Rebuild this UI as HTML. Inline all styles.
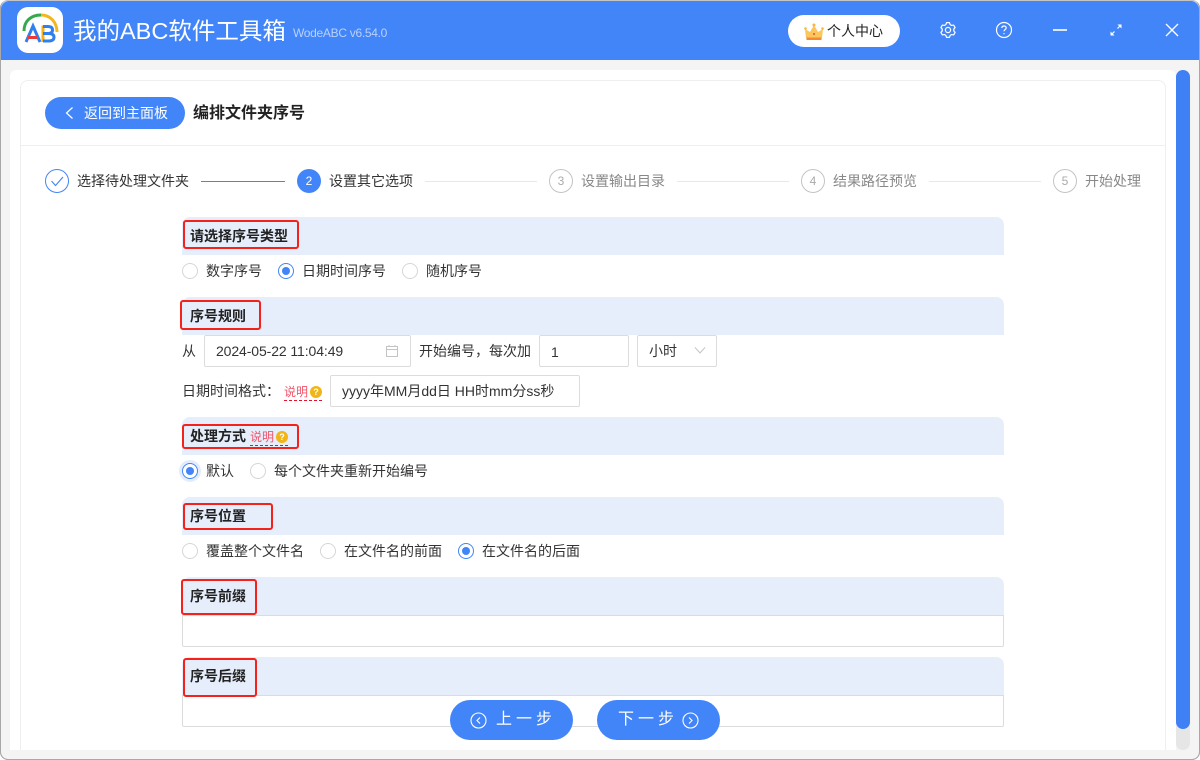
<!DOCTYPE html>
<html lang="zh"><head><meta charset="utf-8"><title>我的ABC软件工具箱</title>
<style>
*{box-sizing:border-box}
html,body{margin:0;padding:0;width:1200px;height:760px;overflow:hidden;background:#fff}
body{font-family:"Liberation Sans","Noto Sans CJK SC",sans-serif;font-size:14px;color:#333;position:relative}
.a{position:absolute}
.t{position:absolute;white-space:nowrap;line-height:20px}
.bar{position:absolute;left:182px;width:822px;height:38px;background:#e6edfb;border-radius:8px 8px 0 0}
.red{position:absolute;border:2.5px solid #f5221b;border-radius:3px}
.h{position:absolute;white-space:nowrap;font-weight:bold;font-size:14px;line-height:20px;color:#222;left:190px}
.r{position:absolute;width:16px;height:16px;border-radius:50%;border:1px solid #d6d6d6;background:#fff}
.r.on{border-color:#4285f9}
.r.on:after{content:"";position:absolute;left:3px;top:3px;width:8px;height:8px;border-radius:50%;background:#4285f9}
.box{position:absolute;border:1px solid #dcdcdc;border-radius:2px;background:#fff}
.num{position:absolute;width:24px;height:24px;border-radius:50%;border:1px solid #c4c4c4;color:#aaa;font-size:12px;line-height:22px;text-align:center}
.grey{color:#888}
.line{position:absolute;height:1px;top:181px;background:#e8e8e8}
.btn{position:absolute;top:700px;height:40px;width:123px;border-radius:20px;background:#4285f9;color:#fff;font-size:16px;line-height:40px;white-space:nowrap}
.q{position:absolute;width:12px;height:12px;border-radius:50%;background:#f2b517;color:#fff;font-size:9px;font-weight:bold;line-height:12px;text-align:center}
.link{position:absolute;color:#f0556a;font-size:12px;line-height:18px;white-space:nowrap;border-bottom:1px dashed #e8112d}
</style></head><body>
<div class="a" style="left:0;top:0;width:1200px;height:760px;background:#f4f4f4;border-radius:8px;border:1px solid #a8a8a8;border-top-color:#bbb"></div>
<div class="a" style="left:1px;top:1px;width:1198px;height:59px;background:#4285f9;border-radius:8px 8px 0 0"></div>

<!-- logo -->
<div class="a" style="left:17px;top:7px;width:46px;height:46px;background:#fff;border-radius:11px"></div>
<svg class="a" style="left:17px;top:7px" width="46" height="46" viewBox="0 0 46 46" fill="none">
<path d="M7 24C7 14 14 8 24 8" stroke="#35a94c" stroke-width="3"/>
<path d="M24 8C33 8 40 15 40 25" stroke="#f4b61e" stroke-width="3"/>
<path d="M9 35L16 19L23 35" stroke="#2f80ee" stroke-width="3"/>
<path d="M11 30.500H20" stroke="#ea3a3a" stroke-width="3"/>
<path d="M26 18.500V35" stroke="#f2b01e" stroke-width="3"/>
<path d="M26 19.500H31Q35.500 19.500 35.500 23Q35.500 26.500 31 26.500H26M31 26.500Q37 26.500 37 30.200Q37 34 31 34H26" stroke="#2f80ee" stroke-width="3"/>
</svg>
<div class="t" style="left:73px;top:16px;font-size:23.5px;line-height:30px;color:#fff">我的ABC软件工具箱</div>
<div class="t" style="left:293px;top:23px;font-size:12px;letter-spacing:-.3px;color:#b9d1fb">WodeABC v6.54.0</div>

<!-- user btn -->
<div class="a" style="left:788px;top:15px;width:112px;height:32px;border-radius:16px;background:#fff"></div>
<svg class="a" style="left:804px;top:23px" width="20" height="18" viewBox="0 0 20 18"><path d="M2 15L1 6L6 9L10 2L14 9L19 6L18 15Z" fill="#fbc65c"/><rect x="2.500" y="14.500" width="15" height="2.500" fill="#f58a2c"/><circle cx="10" cy="2" r="1.500" fill="#f9b53f"/><circle cx="1.500" cy="5.500" r="1.300" fill="#f9b53f"/><circle cx="18.500" cy="5.500" r="1.300" fill="#f9b53f"/><circle cx="10" cy="11" r="1" fill="#e8503a"/></svg>
<div class="t" style="left:827px;top:21px;font-size:14px;color:#222">个人中心</div>

<!-- window icons -->
<svg class="a" style="left:938px;top:20px" width="20" height="20" viewBox="0 0 20 20" fill="none" stroke="#fff" stroke-width="1.200" stroke-linejoin="round"><path d="M7.830 4.620L8.570 2.640L11.430 2.640L12.170 4.620L13.570 5.430L15.660 5.080L17.090 7.560L15.740 9.190V10.810L17.090 12.440L15.660 14.920L13.570 14.570L12.170 15.380L11.430 17.360L8.570 17.360L7.830 15.380L6.430 14.570L4.340 14.920L2.910 12.440L4.260 10.810V9.190L2.910 7.560L4.340 5.080L6.430 5.430Z"/><circle cx="10" cy="10" r="2.600"/></svg>
<svg class="a" style="left:994px;top:20px" width="20" height="20" viewBox="0 0 20 20" fill="none" stroke="#fff" stroke-width="1.200"><circle cx="10" cy="10" r="7.500"/><path d="M7.800 8C7.800 6.700 8.800 6 10 6C11.300 6 12.200 6.800 12.200 7.900C12.200 9.500 10 9.500 10 11.300"/><path d="M10 13V14.200"/></svg>
<div class="a" style="left:1053px;top:29px;width:14px;height:2px;background:#dbe7fd"></div>
<svg class="a" style="left:1108px;top:22px" width="16" height="16" viewBox="0 0 16 16" fill="none" stroke="#fff" stroke-width="1.200"><path d="M3 13L6.500 9.500M9.500 6.500L13 3"/><path d="M2.500 9.500V13.500H6.500L2.500 9.500Z M13.500 6.500V2.500H9.500L13.500 6.500Z" fill="#fff" stroke="none"/></svg>
<svg class="a" style="left:1164px;top:22px" width="16" height="16" viewBox="0 0 16 16" fill="none" stroke="#fff" stroke-width="1.300"><path d="M2 2L14 14M14 2L2 14"/></svg>

<!-- outer panel -->
<div class="a" style="left:10px;top:70px;width:1166px;height:680px;background:#fff;border-radius:6px 6px 0 0"></div>
<div class="a" style="left:20px;top:80px;width:1146px;height:680px;background:#fff;border:1px solid #efefef;border-radius:8px 8px 0 0"></div>
<div class="a" style="left:21px;top:145px;width:1144px;height:1px;background:#efefef"></div>

<!-- scrollbar -->
<div class="a" style="left:1176px;top:70px;width:14px;height:680px;background:#e6e6e6;border-radius:7px"></div>
<div class="a" style="left:1176px;top:70px;width:14px;height:659px;background:#4080f5;border-radius:7px"></div>

<!-- back -->
<div class="a" style="left:45px;top:97px;width:140px;height:32px;border-radius:16px;background:#4285f9"></div>
<svg class="a" style="left:63px;top:106px" width="12" height="14" viewBox="0 0 12 14" fill="none" stroke="#fff" stroke-width="1.200"><path d="M9.500 1.500L3.500 7L9.500 12.500"/></svg>
<div class="t" style="left:84px;top:103px;color:#fff;font-size:14px">返回到主面板</div>
<div class="t" style="left:193px;top:104px;font-size:16px;font-weight:bold;color:#222">编排文件夹序号</div>

<!-- steps -->
<div class="a" style="left:45px;top:169px;width:24px;height:24px;border-radius:50%;border:1px solid #4285f9"></div>
<svg class="a" style="left:45px;top:169px" width="24" height="24" viewBox="0 0 24 24" fill="none" stroke="#4285f9" stroke-width="1.100"><path d="M6.500 12L10.500 16.500L18 8"/></svg>
<div class="t" style="left:77px;top:171px">选择待处理文件夹</div>
<div class="line" style="left:201px;width:84px;background:#4a84e8"></div>
<div class="a" style="left:297px;top:169px;width:24px;height:24px;border-radius:50%;background:#4285f9;color:#fff;font-size:12px;line-height:25px;text-align:center">2</div>
<div class="t" style="left:329px;top:171px">设置其它选项</div>
<div class="line" style="left:425px;width:112px"></div>
<div class="num" style="left:549px;top:169px">3</div>
<div class="t grey" style="left:581px;top:171px">设置输出目录</div>
<div class="line" style="left:677px;width:112px"></div>
<div class="num" style="left:801px;top:169px">4</div>
<div class="t grey" style="left:833px;top:171px">结果路径预览</div>
<div class="line" style="left:929px;width:112px"></div>
<div class="num" style="left:1053px;top:169px">5</div>
<div class="t grey" style="left:1085px;top:171px">开始处理</div>

<!-- section 1 -->
<div class="bar" style="top:217px"></div>
<div class="h" style="top:226px">请选择序号类型</div>
<div class="red" style="left:183px;top:220px;width:116px;height:29px"></div>
<div class="r" style="left:182px;top:263px"></div><div class="t" style="left:206px;top:261px">数字序号</div>
<div class="r on" style="left:278px;top:263px"></div><div class="t" style="left:302px;top:261px">日期时间序号</div>
<div class="r" style="left:402px;top:263px"></div><div class="t" style="left:426px;top:261px">随机序号</div>

<!-- section 2 -->
<div class="bar" style="top:297px"></div>
<div class="h" style="top:306px">序号规则</div>
<div class="red" style="left:180px;top:300px;width:81px;height:30px"></div>
<div class="t" style="left:182px;top:341px">从</div>
<div class="box" style="left:204px;top:335px;width:207px;height:32px"></div>
<div class="t" style="left:216px;top:341px;letter-spacing:-.1px">2024-05-22 11:04:49</div>
<svg class="a" style="left:385px;top:344px" width="14" height="14" viewBox="0 0 14 14" fill="none" stroke="#c4c4c4"><rect x="1.500" y="2.500" width="11" height="10"/><path d="M1.500 5.500H12.500M4 1V3M10 1V3"/></svg>
<div class="t" style="left:419px;top:341px">开始编号，每次加</div>
<div class="box" style="left:539px;top:335px;width:90px;height:32px"></div>
<div class="t" style="left:551px;top:342px">1</div>
<div class="box" style="left:637px;top:335px;width:80px;height:32px"></div>
<div class="t" style="left:649px;top:341px">小时</div>
<svg class="a" style="left:694px;top:346px" width="12" height="9" viewBox="0 0 12 9" fill="none" stroke="#c4c4c4"><path d="M1 1.500L6 7L11 1.500"/></svg>
<div class="t" style="left:182px;top:381px">日期时间格式：</div>
<div class="link" style="left:284px;top:383px;width:38px;height:18px">说明</div>
<div class="q" style="left:310px;top:386px">?</div>
<div class="box" style="left:330px;top:375px;width:250px;height:32px"></div>
<div class="t" style="left:342px;top:381px">yyyy年MM月dd日 HH时mm分ss秒</div>

<!-- section 3 -->
<div class="bar" style="top:417px"></div>
<div class="h" style="top:426px">处理方式</div>
<div class="link" style="left:250px;top:428px;width:38px;height:18px">说明</div>
<div class="q" style="left:276px;top:431px">?</div>
<div class="red" style="left:182px;top:424px;width:117px;height:25px"></div>
<div class="a" style="left:179px;top:460px;width:22px;height:22px;border-radius:50%;background:#e3ecfd"></div>
<div class="r on" style="left:182px;top:463px"></div><div class="t" style="left:206px;top:461px">默认</div>
<div class="r" style="left:250px;top:463px"></div><div class="t" style="left:274px;top:461px">每个文件夹重新开始编号</div>

<!-- section 4 -->
<div class="bar" style="top:497px"></div>
<div class="h" style="top:506px">序号位置</div>
<div class="red" style="left:183px;top:503px;width:90px;height:27px"></div>
<div class="r" style="left:182px;top:543px"></div><div class="t" style="left:206px;top:541px">覆盖整个文件名</div>
<div class="r" style="left:320px;top:543px"></div><div class="t" style="left:344px;top:541px">在文件名的前面</div>
<div class="r on" style="left:458px;top:543px"></div><div class="t" style="left:482px;top:541px">在文件名的后面</div>

<!-- section 5 -->
<div class="bar" style="top:577px"></div>
<div class="h" style="top:586px">序号前缀</div>
<div class="box" style="left:182px;top:615px;width:822px;height:32px;border-radius:0 0 2px 2px"></div>
<div class="red" style="left:181px;top:579px;width:76px;height:36px"></div>

<!-- section 6 -->
<div class="bar" style="top:657px"></div>
<div class="h" style="top:666px">序号后缀</div>
<div class="box" style="left:182px;top:695px;width:822px;height:32px;border-radius:0 0 2px 2px"></div>
<div class="red" style="left:183px;top:658px;width:74px;height:39px"></div>

<!-- buttons -->
<div class="btn" style="left:450px"><span class="a" style="left:46px;top:0;letter-spacing:4px">上一步</span></div>
<svg class="a" style="left:470px;top:712px" width="17" height="17" viewBox="0 0 17 17" fill="none" stroke="#fff" stroke-width="1.100"><circle cx="8.500" cy="8.500" r="7.500"/><path d="M10 5.500L7 8.500L10 11.500"/></svg>
<div class="btn" style="left:597px"><span class="a" style="left:21px;top:0;letter-spacing:4px">下一步</span></div>
<svg class="a" style="left:682px;top:712px" width="17" height="17" viewBox="0 0 17 17" fill="none" stroke="#fff" stroke-width="1.100"><circle cx="8.500" cy="8.500" r="7.500"/><path d="M7 5.500L10 8.500L7 11.500"/></svg>

<!-- bottom frame -->
<div class="a" style="left:1px;top:750px;width:1198px;height:9px;background:#f4f4f4;border-radius:0 0 8px 8px"></div>
<div class="a" style="left:0;top:0;width:1200px;height:760px;border-radius:8px;border:1px solid #a8a8a8;pointer-events:none;border-top-color:#c4c4c4"></div>
</body></html>
